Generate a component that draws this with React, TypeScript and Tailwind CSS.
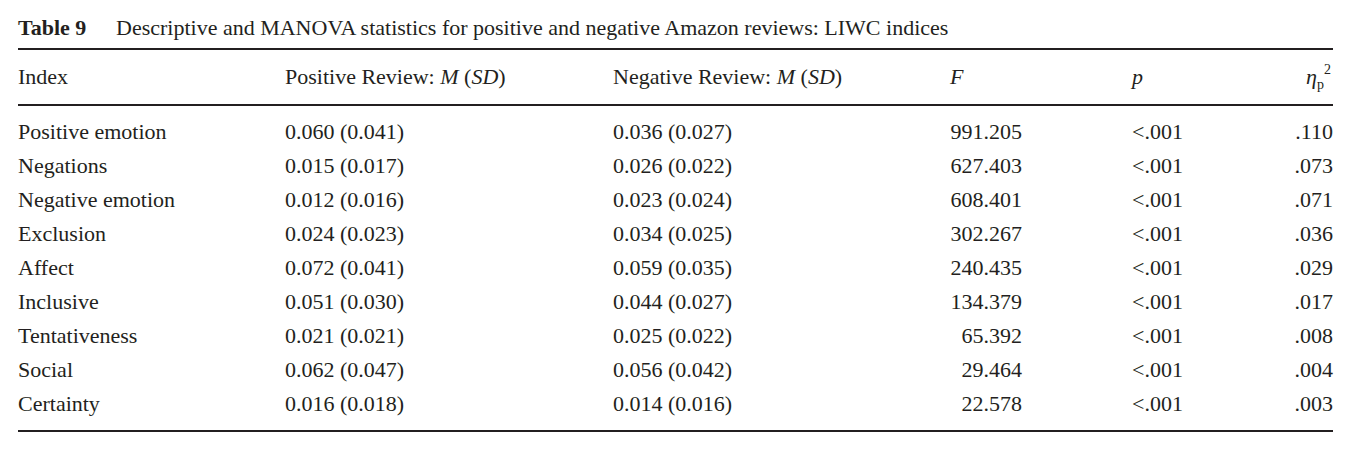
const rows: [string, string, string, string, string, string][] = [
  ["Positive emotion", "0.060 (0.041)", "0.036 (0.027)", "991.205", "<.001", ".110"],
  ["Negations", "0.015 (0.017)", "0.026 (0.022)", "627.403", "<.001", ".073"],
  ["Negative emotion", "0.012 (0.016)", "0.023 (0.024)", "608.401", "<.001", ".071"],
  ["Exclusion", "0.024 (0.023)", "0.034 (0.025)", "302.267", "<.001", ".036"],
  ["Affect", "0.072 (0.041)", "0.059 (0.035)", "240.435", "<.001", ".029"],
  ["Inclusive", "0.051 (0.030)", "0.044 (0.027)", "134.379", "<.001", ".017"],
  ["Tentativeness", "0.021 (0.021)", "0.025 (0.022)", "65.392", "<.001", ".008"],
  ["Social", "0.062 (0.047)", "0.056 (0.042)", "29.464", "<.001", ".004"],
  ["Certainty", "0.016 (0.018)", "0.014 (0.016)", "22.578", "<.001", ".003"],
];

export default function App() {
  return (
    <div className="w-[1348px] h-[450px] bg-white text-[#231f20] font-['Liberation_Serif','Times_New_Roman',serif] text-[22px] leading-none">
      <div className="w-[1315px] ml-[18px]">
        <div className="h-[48px] flex items-center pt-[8px]">
          <span className="font-bold w-[98px]">Table 9</span>
          <span>Descriptive and MANOVA statistics for positive and negative Amazon reviews: LIWC indices</span>
        </div>
        <div className="border-t-2 border-[#231f20]" />
        <div className="h-[54px] flex items-center">
          <div className="w-[267px]">Index</div>
          <div className="w-[328px]">
            Positive Review: <i>M</i> (<i>SD</i>)
          </div>
          <div className="w-[337px]">
            Negative Review: <i>M</i> (<i>SD</i>)
          </div>
          <div className="w-[182px]">
            <i>F</i>
          </div>
          <div className="w-[100px]">
            <i>p</i>
          </div>
          <div className="flex-1 text-right pr-[2px]">
            <i>η</i>
            <sub className="text-[14px] align-baseline relative top-[5px]">p</sub>
            <sup className="text-[14px] relative -top-[10px]">2</sup>
          </div>
        </div>
        <div className="border-t-2 border-[#231f20]" />
        <div className="pt-[9px] pb-[9px]">
          {rows.map((r) => (
            <div key={r[0]} className="h-[34px] flex items-center">
              <div className="w-[267px]">{r[0]}</div>
              <div className="w-[328px]">{r[1]}</div>
              <div className="w-[337px]">{r[2]}</div>
              <div className="w-[182px]">
                <div className="w-[72px] text-right">{r[3]}</div>
              </div>
              <div className="w-[100px]">{r[4]}</div>
              <div className="flex-1 text-right">{r[5]}</div>
            </div>
          ))}
        </div>
        <div className="border-t-2 border-[#231f20]" />
      </div>
    </div>
  );
}
